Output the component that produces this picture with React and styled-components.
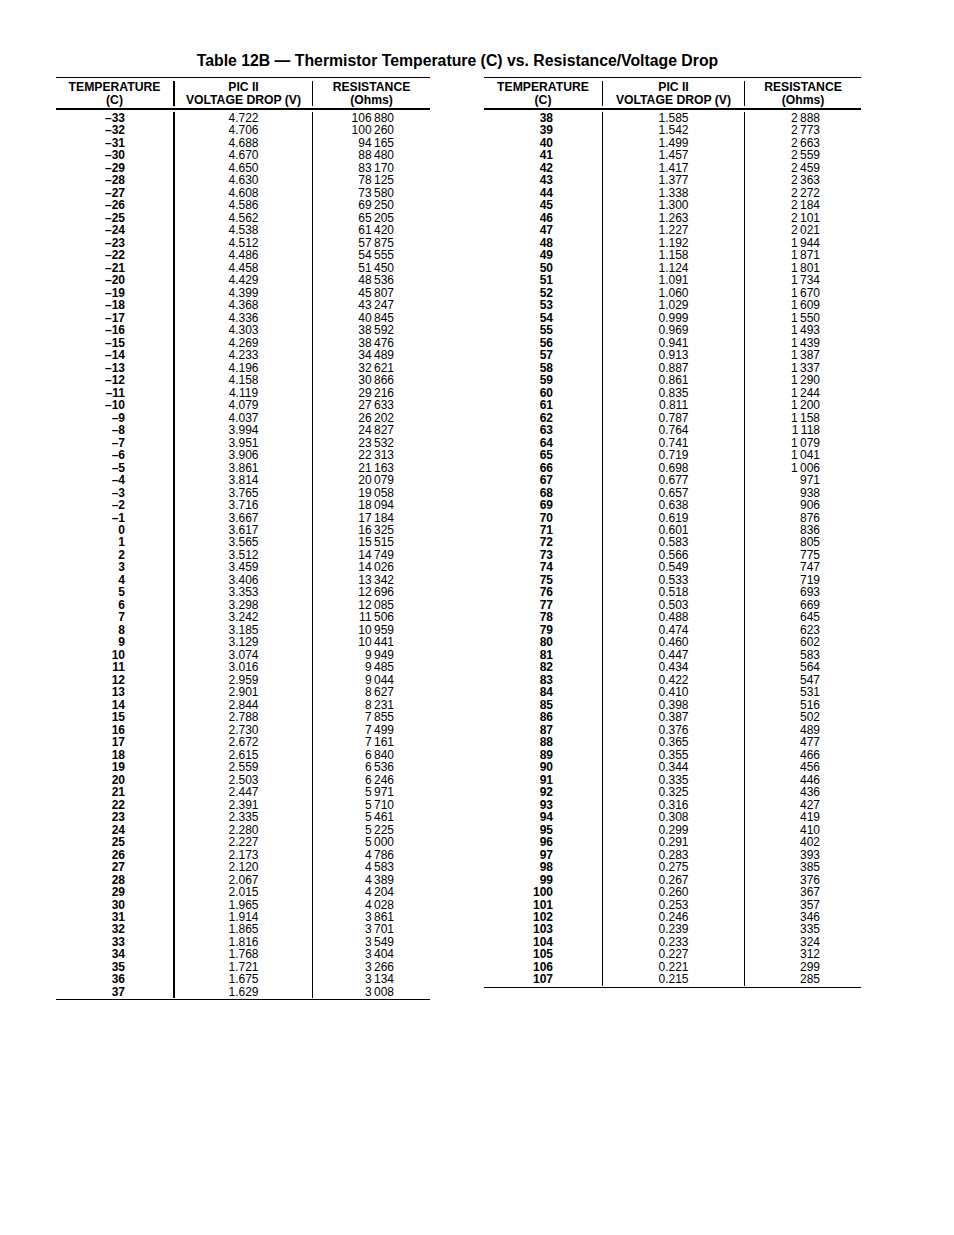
import styled, { createGlobalStyle } from 'styled-components';

const GlobalStyle = createGlobalStyle`
  html, body { margin: 0; padding: 0; background: #fff; }
  body { font-family: "Liberation Sans", Arial, sans-serif; color: #000; }
`;

// thousands are split by a thin space, as in the printed table
const fmt = (n) => {
  if (n < 1000) return String(n);
  const s = String(n);
  return s.slice(0, s.length - 3) + '\u2009' + s.slice(-3);
};

const leftData = [
  [-33, '4.722', 106880], [-32, '4.706', 100260], [-31, '4.688', 94165], [-30, '4.670', 88480],
  [-29, '4.650', 83170], [-28, '4.630', 78125], [-27, '4.608', 73580], [-26, '4.586', 69250],
  [-25, '4.562', 65205], [-24, '4.538', 61420], [-23, '4.512', 57875], [-22, '4.486', 54555],
  [-21, '4.458', 51450], [-20, '4.429', 48536], [-19, '4.399', 45807], [-18, '4.368', 43247],
  [-17, '4.336', 40845], [-16, '4.303', 38592], [-15, '4.269', 38476], [-14, '4.233', 34489],
  [-13, '4.196', 32621], [-12, '4.158', 30866], [-11, '4.119', 29216], [-10, '4.079', 27633],
  [-9, '4.037', 26202], [-8, '3.994', 24827], [-7, '3.951', 23532], [-6, '3.906', 22313],
  [-5, '3.861', 21163], [-4, '3.814', 20079], [-3, '3.765', 19058], [-2, '3.716', 18094],
  [-1, '3.667', 17184], [0, '3.617', 16325], [1, '3.565', 15515], [2, '3.512', 14749],
  [3, '3.459', 14026], [4, '3.406', 13342], [5, '3.353', 12696], [6, '3.298', 12085],
  [7, '3.242', 11506], [8, '3.185', 10959], [9, '3.129', 10441], [10, '3.074', 9949],
  [11, '3.016', 9485], [12, '2.959', 9044], [13, '2.901', 8627], [14, '2.844', 8231],
  [15, '2.788', 7855], [16, '2.730', 7499], [17, '2.672', 7161], [18, '2.615', 6840],
  [19, '2.559', 6536], [20, '2.503', 6246], [21, '2.447', 5971], [22, '2.391', 5710],
  [23, '2.335', 5461], [24, '2.280', 5225], [25, '2.227', 5000], [26, '2.173', 4786],
  [27, '2.120', 4583], [28, '2.067', 4389], [29, '2.015', 4204], [30, '1.965', 4028],
  [31, '1.914', 3861], [32, '1.865', 3701], [33, '1.816', 3549], [34, '1.768', 3404],
  [35, '1.721', 3266], [36, '1.675', 3134], [37, '1.629', 3008],
];

const rightData = [
  [38, '1.585', 2888], [39, '1.542', 2773], [40, '1.499', 2663], [41, '1.457', 2559],
  [42, '1.417', 2459], [43, '1.377', 2363], [44, '1.338', 2272], [45, '1.300', 2184],
  [46, '1.263', 2101], [47, '1.227', 2021], [48, '1.192', 1944], [49, '1.158', 1871],
  [50, '1.124', 1801], [51, '1.091', 1734], [52, '1.060', 1670], [53, '1.029', 1609],
  [54, '0.999', 1550], [55, '0.969', 1493], [56, '0.941', 1439], [57, '0.913', 1387],
  [58, '0.887', 1337], [59, '0.861', 1290], [60, '0.835', 1244], [61, '0.811', 1200],
  [62, '0.787', 1158], [63, '0.764', 1118], [64, '0.741', 1079], [65, '0.719', 1041],
  [66, '0.698', 1006], [67, '0.677', 971], [68, '0.657', 938], [69, '0.638', 906],
  [70, '0.619', 876], [71, '0.601', 836], [72, '0.583', 805], [73, '0.566', 775],
  [74, '0.549', 747], [75, '0.533', 719], [76, '0.518', 693], [77, '0.503', 669],
  [78, '0.488', 645], [79, '0.474', 623], [80, '0.460', 602], [81, '0.447', 583],
  [82, '0.434', 564], [83, '0.422', 547], [84, '0.410', 531], [85, '0.398', 516],
  [86, '0.387', 502], [87, '0.376', 489], [88, '0.365', 477], [89, '0.355', 466],
  [90, '0.344', 456], [91, '0.335', 446], [92, '0.325', 436], [93, '0.316', 427],
  [94, '0.308', 419], [95, '0.299', 410], [96, '0.291', 402], [97, '0.283', 393],
  [98, '0.275', 385], [99, '0.267', 376], [100, '0.260', 367], [101, '0.253', 357],
  [102, '0.246', 346], [103, '0.239', 335], [104, '0.233', 324], [105, '0.227', 312],
  [106, '0.221', 299], [107, '0.215', 285],
];

const Page = styled.div`
  width: 954px;
  padding-top: 51px;
`;

const Title = styled.h1`
  margin: 0 0 7px;
  text-align: center;
  font-size: 15.8px;
  font-weight: bold;
  line-height: 19px;
  padding-right: 39px;
`;

const Tables = styled.div`
  display: flex;
  align-items: flex-start;
  padding-left: 56px;
  gap: 54px;
`;

const Table = styled.div`
  width: ${(p) => p.$width}px;
  border-top: 1px solid #000;
  border-bottom: 1.5px solid #000;
`;

const Grid = styled.div`
  display: grid;
  grid-template-columns: ${(p) => p.$cols};
`;

const Head = styled(Grid)`
  border-bottom: 2px solid #000;
  padding: 3px 0 2px;
`;

const HeadCell = styled.div`
  text-align: center;
  font-weight: bold;
  font-size: 12.2px;
  line-height: 12.5px;
  white-space: nowrap;
  border-left: ${(p) => (p.$line ? `${p.$line}px solid #000` : 'none')};
`;

const Body = styled(Grid)`
  padding: 2px 0 1px;
`;

const Col = styled.div`
  display: flex;
  flex-direction: column;
  align-items: ${(p) => p.$align};
  padding-right: ${(p) => p.$pr || 0}px;
  border-left: ${(p) => (p.$line ? `${p.$line}px solid #000` : 'none')};
  font-size: 12px;
  font-weight: ${(p) => (p.$bold ? 'bold' : 'normal')};
  line-height: 12.486px;
`;

const Cell = styled.div`
  white-space: nowrap;
`;

function DataTable({ rows, width, cols, tempPad, resPad, line1 }) {
  return (
    <Table $width={width}>
      <Head $cols={cols}>
        <HeadCell>TEMPERATURE<br />(C)</HeadCell>
        <HeadCell $line={line1}>PIC II<br />VOLTAGE DROP (V)</HeadCell>
        <HeadCell $line={1}>RESISTANCE<br />(Ohms)</HeadCell>
      </Head>
      <Body $cols={cols}>
        <Col $align="flex-end" $pr={tempPad} $bold>
          {rows.map((r) => (
            <Cell key={r[0]}>{r[0] < 0 ? '\u2013' + Math.abs(r[0]) : r[0]}</Cell>
          ))}
        </Col>
        <Col $align="center" $line={line1}>
          {rows.map((r) => (
            <Cell key={r[0]}>{r[1]}</Cell>
          ))}
        </Col>
        <Col $align="flex-end" $pr={resPad} $line={1}>
          {rows.map((r) => (
            <Cell key={r[0]}>{fmt(r[2])}</Cell>
          ))}
        </Col>
      </Body>
    </Table>
  );
}

export default function App() {
  return (
    <Page>
      <GlobalStyle />
      <Title>Table 12B — Thermistor Temperature (C) vs. Resistance/Voltage Drop</Title>
      <Tables>
        <DataTable rows={leftData} width={374} cols="117px 139px 118px" tempPad={48} resPad={36} line1={2} />
        <DataTable rows={rightData} width={377} cols="118px 142px 117px" tempPad={49} resPad={41} line1={1} />
      </Tables>
    </Page>
  );
}
